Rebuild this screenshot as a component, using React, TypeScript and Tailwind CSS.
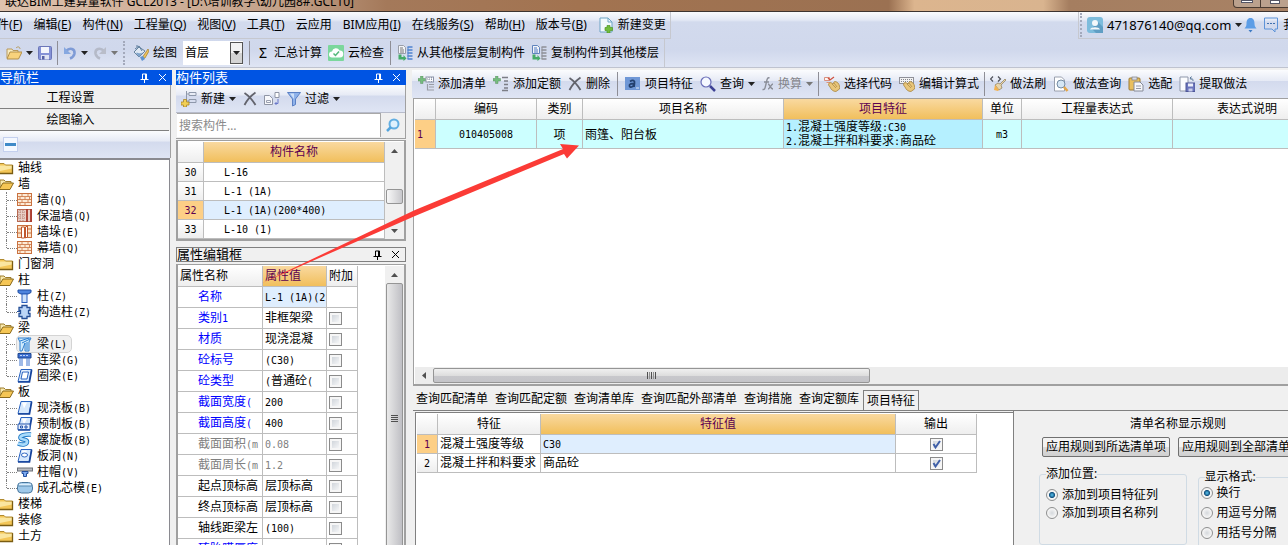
import React from "react";

/* Splits a label so that latin runs are set in a narrow monospaced face. */
function T({ s }: { s: string }) {
  return (
    <>
      {s.split(/([\x21-\x7e]+)/).map((p, i) =>
        /^[\x21-\x7e]+$/.test(p) ? (
          <span key={i} className="font-['DejaVu_Sans_Mono','Liberation_Mono',monospace] text-[10px]">
            {p}
          </span>
        ) : (
          p
        ),
      )}
    </>
  );
}

function Svg({ children, w = 16, h = 16 }: { children: React.ReactNode; w?: number; h?: number }) {
  return (
    <svg width={w} height={h} viewBox={`0 0 ${w} ${h}`} fill="none" className="shrink-0" aria-hidden="true">
      {children}
    </svg>
  );
}

const Caret = ({ dim = false }: { dim?: boolean }) => (
  <Svg w={7} h={4}>
    <path d="M0 0h7L3.500 4z" fill={dim ? "#777" : "#222"} />
  </Svg>
);
const Sep = ({ tight = false }: { tight?: boolean }) => (
  <span className={`h-6 w-px shrink-0 bg-[#8e8e96] ${tight ? "-mx-0.5" : ""}`} />
);
const Grip = () => <span className="h-6 w-0 shrink-0 border-l-2 border-dotted border-[#a3a9bb]" />;

const OpenIcon = () => (
  <Svg>
    <path d="M1 13V4h5l1 1.500h5V8" fill="#f8ecc0" stroke="#b8985a" />
    <path d="M1 14 4 7h12l-3.500 7z" fill="#f8d27c" stroke="#b38f48" />
    <path d="M10 3c2-2 4-1 4 1" stroke="#b59a5c" />
  </Svg>
);
const SaveIcon = () => (
  <Svg w={14}>
    <rect x=".5" y="1.500" width="13" height="13" rx="1" fill="#8592d6" stroke="#6b76b8" />
    <rect x="3" y="2" width="8" height="6" fill="#f3f5fc" />
    <rect x="3" y="10" width="8" height="4.500" fill="#dfe3f3" />
    <rect x="4" y="11" width="2.500" height="3.500" fill="#5560a5" />
  </Svg>
);
const UndoIcon = () => (
  <Svg w={14}>
    <path d="M3 6c4-4 9-2 8.500 2.500C11 11 9.500 12.500 7 13.500" stroke="#7e9bd6" strokeWidth="2.600" />
    <path d="M1 2v7h7z" fill="#86a8e0" />
  </Svg>
);
const RedoIcon = () => (
  <Svg w={14}>
    <path d="M11 6C7 2 2 4 2.500 8.500 3 11 4.500 12.500 7 13.500" stroke="#b5bac8" strokeWidth="2.600" />
    <path d="M13 2v7H6z" fill="#b9bdc9" />
  </Svg>
);
const PaintIcon = () => (
  <Svg>
    <path d="M1 7 6 2l6 4-6 6z" fill="#dfe8f3" stroke="#66839e" />
    <path d="M4 2V0M2 4l4-3 3 5" stroke="#5c7d9c" />
    <path d="M3 8c2-1 3 2 7-1l-4 5z" fill="#7ea3cb" />
    <path d="m15 4-4 6-3 4 4-1 4-7z" fill="#efc45c" stroke="#9d7a2c" strokeWidth=".7" />
    <path d="M7 12 9 16l3-2-2-3z" fill="#5e93d1" />
  </Svg>
);
const CloudCheckIcon = () => (
  <Svg>
    <rect width="16" height="16" rx="1" fill="#7bd79c" />
    <path d="M4 12.500a3 3 0 0 1 0-6 4 4 0 0 1 7.500-1 3.500 3.500 0 0 1 .5 7z" fill="#fff" />
    <path d="m5.500 8.500 2 2 3.500-4" stroke="#55b87b" strokeWidth="1.500" />
  </Svg>
);
const CopyFloorIcon = ({ flip = false }: { flip?: boolean }) => (
  <Svg>
    <path d="M1.500.5h5l2 2v6h-7z" fill="#f2f4f8" stroke={flip ? "#5f83bd" : "#9a9ea8"} />
    <path d="M3 3h3M3 5h4M3 7h4" stroke={flip ? "#4c79c4" : "#777"} />
    <path d="M1.500 9.500h3v2.500h2v-2l3 3.500-3 2.500v-1.500h-5z" fill="#45ab68" />
    <path d="M10.500 2h5M10.500 5h5M10.500 8h5M10.500 11h5M10.500 14h5" stroke={flip ? "#8d8f96" : "#4f83cf"} strokeWidth="1.600" />
    <path d="M11 2v12" stroke={flip ? "#8d8f96" : "#4f83cf"} />
  </Svg>
);
const NewDocIcon = () => (
  <Svg>
    <path d="M2 1h8l4 4v10H2z" fill="#f2f9fd" stroke="#6fa5c5" />
    <path d="M10 1v4h4" stroke="#6fa5c5" />
    <path d="M9 8.500h3v2h2.500v3H12V16H9v-2.500H7v-3h2z" fill="#72bd3d" stroke="#4f9727" strokeWidth=".7" />
  </Svg>
);
const UserIcon = () => (
  <Svg>
    <rect width="16" height="16" rx="3" fill="#7dbcdc" />
    <path d="m10 4 6 6v6H9l-4-4z" fill="#5f9ec4" />
    <circle cx="8" cy="6" r="3" fill="#f3f8fb" />
    <path d="M3 12.500c1-3 9-3 10 0z" fill="#f3f8fb" />
  </Svg>
);
const BellIcon = () => (
  <Svg w={13}>
    <path d="M6.500 1c3 0 4 2.500 4 5.500 0 2 .5 3.500 2 5h-12c1.500-1.500 2-3 2-5 0-3 1-5.500 4-5.500z" fill="#5c9de6" />
    <path d="M4.500 13h4l-2 2.500z" fill="#3f7cc4" />
  </Svg>
);
const ChatIcon = () => (
  <Svg>
    <path d="M1.500 1h13v11H12v3l-3-3H1.500z" stroke="#5d93d8" />
    <path d="M4 6.500h8.500" stroke="#3e6fae" strokeDasharray="2 1" />
  </Svg>
);
const PlusBadge = () => (
  <path d="M2.500 0H5v2.500h2.500V5H5v2.500H2.500V5H0V2.500h2.500z" fill="#74bd7e" stroke="#5c8c62" strokeWidth=".5" />
);
const AddListIcon = () => (
  <Svg>
    <PlusBadge />
    <rect x="8" y="1" width="7.500" height="5" fill="#fff" stroke="#8b93a8" />
    <path d="M9 3h6M11 1v5M13.500 1v5" stroke="#8b93a8" strokeDasharray="1 1" />
    <path d="M11 8.500h5M11 11h5M11 14h5M9.500 8v6h2" stroke="#9a9ca4" strokeWidth="1.200" />
  </Svg>
);
const AddQuotaIcon = () => (
  <Svg>
    <PlusBadge />
    <path d="M9 1.500h6M11 5h4M11 8.500h4M11 12h4M9 14.500h6" stroke="#7c7e86" strokeWidth="1.300" />
  </Svg>
);
const XIcon = () => (
  <Svg w={14}>
    <path d="M1.500 2c3 2 8 7 11 12M12.500 1.500C9 4 4 9 1.500 14" stroke="#62636c" strokeWidth="1.800" />
  </Svg>
);
const FeatureIcon = () => (
  <Svg>
    <rect x="0" y="1" width="15" height="13" fill="#6f97d6" />
    <path d="M5 5.500c3-2 5-1 4.500 1.500L9 11M9 7.500c-3 0-5 .5-4.500 2.500S8 11 9 9" stroke="#23406f" strokeWidth="1.800" />
    <path d="M11 12h3" stroke="#dfe8f6" />
  </Svg>
);
const SearchIcon = () => (
  <Svg>
    <circle cx="6" cy="6" r="5" fill="#f5f8ff" stroke="#6a6eb8" strokeWidth="1.200" />
    <path d="m10 10 5 5" stroke="#3d4194" strokeWidth="2.500" />
  </Svg>
);
const FxIcon = () => (
  <Svg w={12}>
    <path d="M7.500 2C5 1 5 4 4 8s-1 6-3.500 5.500M2 6h5M6 8c2 0 2 5 5 5M11 8c-2 0-3 5-5 5" stroke="#8b8e98" strokeWidth="1.400" />
  </Svg>
);
const HandIcon = ({ keys = false }: { keys?: boolean }) => (
  <Svg>
    {keys ? (
      <>
        <rect x=".5" y="1.500" width="14" height="6" fill="#f3f3f3" stroke="#8f9098" />
        <path d="M2 3.500h11M2 5.500h11" stroke="#85868e" strokeDasharray="1 1" />
      </>
    ) : (
      <>
        <path d="M.5 1.500h5v3h-5zM2.500 6.500h3v3" fill="#fdf3f0" stroke="#d88f7e" />
        <path d="m4 2 2 2 4-3" stroke="#cf4f3d" strokeWidth="1.200" />
      </>
    )}
    <path d="M5 7c1-1 3 0 4 1l1-2c1-1 3 0 4 1 1.500 2 2 4 1.500 6L12 15.500c-3 0-5-2-6-4.500L4.500 9z" fill="#e9c67a" stroke="#a8853f" strokeWidth=".8" />
    <path d="m8 8 4 4M10 7l3 4" stroke="#a8853f" strokeWidth=".7" />
  </Svg>
);
const BrushIcon = () => (
  <Svg>
    <path d="M3 .5 .5 3 3 5.500M8 .5 10.500 3 8 5.500" stroke="#4e5058" strokeWidth="1.200" />
    <path d="m15 3-5 5-2-1-3 2 4 5 3-2-1-3 5-5z" fill="#e9d5ab" stroke="#8a7a55" strokeWidth=".7" />
    <path d="m5 9-1 5 4 1 1-1z" fill="#f4b24e" />
  </Svg>
);
const DocSearchIcon = () => (
  <Svg>
    <path d="M1.500 1h7l3 3v11h-10z" fill="#fff" stroke="#9aa0ae" />
    <circle cx="8" cy="8" r="4" fill="#d5e6f4" stroke="#738aa3" />
    <path d="m11 11 3.500 4" stroke="#e3a64a" strokeWidth="2.500" />
  </Svg>
);
const PasteIcon = () => (
  <Svg>
    <rect x="1" y="2" width="11" height="12" rx="1" fill="#e9bf5e" stroke="#9c7a34" />
    <rect x="4" y="1" width="5" height="3" fill="#d9dbe3" stroke="#7d7f88" strokeWidth=".7" />
    <path d="M6 6h6l3 3v6H6z" fill="#f6f7fb" stroke="#858a98" />
    <path d="M8 10h5M8 12.500h5" stroke="#9599a6" />
  </Svg>
);
const ExtractIcon = () => (
  <Svg>
    <path d="M1 1h8v14H1z" fill="#fbfcfe" stroke="#8f97aa" />
    <rect x="7" y="7" width="9" height="8.500" fill="#6b75bd" stroke="#4e5798" />
    <rect x="9" y="7.500" width="5" height="3" fill="#eceefa" />
    <rect x="9.500" y="12.500" width="4" height="3" fill="#c9cdea" />
    <path d="M14 5c0-3-2-3-3-3M12.500.5 11 2l1.500 2" stroke="#5c7a9a" />
  </Svg>
);
const NewItemIcon = () => (
  <Svg>
    <path d="M8 1.500h7v3H8zM8 8.500h7v3H8zM5.500 0v10H8M5.500 3H8" stroke="#8e98ab" />
    <path d="M2.500 8.500h3v2.500H8v3H5.500v2h-3v-2H0v-3h2.500z" fill="#f2cf54" stroke="#a88629" strokeWidth=".8" />
  </Svg>
);
const CopyIcon = () => (
  <Svg>
    <path d="M.5 4.500h5l3 3v6h-8z" fill="#f7f8fb" stroke="#8f95a5" />
    <path d="M2.500 9.500h4v2h-4z" stroke="#9aa0b0" />
    <path d="M11 1.500h4v5h-4z" fill="#fff" stroke="#8f95a5" />
    <path d="M14 8v4.500h-3M12.500 11l-1.500 1.500 1.500 1.500" stroke="#6a78c9" />
  </Svg>
);
const FilterIcon = () => (
  <Svg w={14}>
    <path d="M.5 1.500h13L8.500 8v5.500l-3 1.500V8z" fill="#8fb2ea" stroke="#5b80c4" />
    <path d="M3 2.500h4L7 8" fill="#cfe0f8" />
  </Svg>
);
const LensIcon = () => (
  <Svg w={14} h={14}>
    <circle cx="8" cy="6" r="4.500" fill="#dff1fd" stroke="#62aee2" strokeWidth="2" />
    <path d="m5 9-4 4" stroke="#55a5dc" strokeWidth="2.500" />
  </Svg>
);
const PinIcon = () => (
  <Svg w={9} h={10}>
    <path d="M2.500 6V1h4v5M5.500 1v5M.5 6.500h8M4.500 6.500V10" stroke="currentColor" />
  </Svg>
);
const CloseIcon = () => (
  <Svg w={9} h={9}>
    <path d="m1 1 7 7M8 1 1 8" stroke="currentColor" />
  </Svg>
);

const BAR = "bg-[linear-gradient(to_bottom,#fbfcfe_0%,#e6eaf5_38%,#d3daed_40%,#dfe5f4_100%)]";
const ORANGE = "bg-[linear-gradient(to_bottom,#f9d9a0,#f1bf5c)] text-[#5c0050]";
const HEAD = "bg-[linear-gradient(to_bottom,#ffffff,#eeeeee)]";
const CELL = "border-b border-r border-[#bdbdbd] p-0 font-normal whitespace-nowrap overflow-hidden";

function Btn({ icon, label, caret, dim }: { icon: React.ReactNode; label?: string; caret?: boolean; dim?: boolean }) {
  return (
    <button
      type="button"
      className={`flex shrink-0 items-center gap-1 whitespace-nowrap ${dim ? "text-[#85868c]" : "text-black"}`}
    >
      {icon}
      {label && <span>{label}</span>}
      {caret && <Caret dim={dim} />}
    </button>
  );
}

function PanelTitle({ title, active }: { title: string; active?: boolean }) {
  return (
    <header
      className={`flex h-[15px] shrink-0 items-center gap-[9px] pr-[5px] text-[13px] leading-[15px] ${
        active ? "bg-[#0054e3] text-white" : "border border-[#808080] text-black"
      }`}
    >
      <h2 className="flex-1 whitespace-nowrap">{title}</h2>
      <button type="button" aria-label="Pin">
        <PinIcon />
      </button>
      <button type="button" aria-label="Close">
        <CloseIcon />
      </button>
    </header>
  );
}

function Check({ label, checked }: { label: string; checked?: boolean }) {
  return (
    <span className="relative inline-block size-[13px] align-middle">
      <input
        type="checkbox"
        aria-label={label}
        defaultChecked={checked}
        className="block size-[13px] appearance-none border border-[#8b8b8b] bg-[linear-gradient(135deg,#c6ccd3,#ffffff)] shadow-[inset_0_0_0_2px_#f6f6f6]"
      />
      {checked && (
        <svg viewBox="0 0 13 13" className="pointer-events-none absolute inset-0 size-[13px]" fill="none" aria-hidden="true">
          <path d="M3.500 6 5.500 9.500 10 3" stroke="#3f5fa8" strokeWidth="2" />
        </svg>
      )}
    </span>
  );
}

function Radio({ name, label, checked }: { name: string; label: string; checked?: boolean }) {
  return (
    <label className="flex items-center gap-1 whitespace-nowrap">
      <input
        type="radio"
        name={name}
        defaultChecked={checked}
        className="size-3 appearance-none rounded-full border border-[#8e8f8f] bg-[radial-gradient(circle,#d4d8dc_0,#f4f4f4_60%)] checked:bg-[radial-gradient(circle,#58c6f2_0,#14527f_38%,#f4f4f4_48%)]"
      />
      {label}
    </label>
  );
}

/* ---- navigation tree ---- */
const Brick = ({ c = "#c9713f" }: { c?: string }) => (
  <Svg>
    <rect x=".5" y="1.500" width="14" height="12" fill="#fdebd6" stroke={c} />
    <path d="M1 4.500h13M1 7.500h13M1 10.500h13M5 2v2.500M11 2v2.500M3 5v2.500M8 5v2.500M12.500 5v2.500M5 8v2.500M11 8v2.500M3 11v2.500M8 11v2.500" stroke={c} strokeWidth=".8" />
  </Svg>
);
const Slab = ({ extra }: { extra?: React.ReactNode }) => (
  <Svg>
    <path d="M4 1.500h10.500l-2.500 12H1z" fill="#d6e8fc" stroke="#2a63c0" />
    <path d="M5 2.500h5l-3 6z" fill="#fff" />
    <path d="M14.500 1.500v1.500L12.500 14H1" stroke="#16439a" strokeWidth="1.600" />
    {extra}
  </Svg>
);
const ICONS: Record<string, React.ReactNode> = {
  brick: <Brick />,
  insul: (
    <Svg>
      <rect x=".5" y="1.500" width="14" height="12" fill="#e9cfc6" stroke="#b86a52" />
      <path d="M1 4h8M1 7h8M1 10h8M3 2v12M6 2v12" stroke="#b98578" strokeDasharray="1 1" />
      <path d="M10 1v13M14 1v13" stroke="#a9392b" strokeWidth="1.800" />
    </Svg>
  ),
  pier: (
    <Svg>
      <rect x=".5" y="1.500" width="14" height="12" fill="#fbe3c8" stroke="#c9713f" />
      <path d="M1 5h13M1 9h13" stroke="#c9713f" />
      <path d="M4.500 3h3v11h-3zM8.500 3l2-1v11l-2 1z" fill="#fff" stroke="#c0562c" />
    </Svg>
  ),
  column: (
    <Svg>
      <path d="M1 2h13v2.500l-3 1.500H4L1 4.500z" fill="#4d84de" stroke="#1f4da3" />
      <rect x="5" y="6" width="5" height="8.500" fill="#cfe3fb" stroke="#2a5fbd" />
    </Svg>
  ),
  cross: (
    <Svg>
      <path d="M5 1.500h5v2h3v3h-1.500v3H13v3h-3v2H5v-2H2v-3h1.500v-3H2v-3h3z" fill="#bcd6f7" stroke="#254f97" strokeWidth="1.300" />
      <path d="M0 7.500h4" stroke="#254f97" />
    </Svg>
  ),
  beam: (
    <Svg>
      <path d="M1 2h13l-2 4v9H8V7l-3 8H3V6z" fill="#cfeafc" stroke="#2c7fd0" />
      <path d="m3 5 9-3M5 7l8-4M10 6v8" stroke="#2c7fd0" />
    </Svg>
  ),
  link: (
    <Svg>
      <path d="M1 1.500h13V6H1z" fill="#3d6fd0" stroke="#1e478f" />
      <path d="M3 3.500h9" stroke="#bcd3f6" strokeDasharray="2 1" />
      <path d="M3 6v8M5 6v8M10 6v8M12 6v8" stroke="#3f74cf" />
    </Svg>
  ),
  ring: <Slab extra={<path d="M5.500 4h6l-1.500 7H4z" fill="#fff" stroke="#2a63c0" />} />,
  slab: <Slab />,
  precast: <Slab extra={<path d="M1 8h12v5.500H1zM3.500 10h2v2h-2zM8 10h2v2H8z" fill="#e8f0fd" stroke="#2457ae" />} />,
  spiral: (
    <Svg>
      <path d="M14 2.500C8 2 3 3.500 3.500 6c.5 2 6.500 1 6.500 3.500 0 3-4 4-9 2" stroke="#1b76c4" strokeWidth="4.500" />
      <path d="M14 2.500C8 2 3 3.500 3.500 6c.5 2 6.500 1 6.500 3.500 0 3-4 4-9 2" stroke="#a9dbfa" strokeWidth="2.800" />
    </Svg>
  ),
  hole: <Slab extra={<ellipse cx="7.500" cy="7" rx="3" ry="2" fill="#fff" stroke="#2a63c0" />} />,
  cap: (
    <Svg>
      <rect x=".5" y="4" width="15" height="3" fill="#b9bcc2" stroke="#6d7077" />
      <path d="M5 7.500h6v2H9.500v3h-3v-3H5z" fill="#7ba9ee" stroke="#234f9f" />
    </Svg>
  ),
  core: (
    <Svg>
      <rect x=".5" y="2.500" width="15" height="10.500" rx="4" fill="#9fc9ea" stroke="#49779d" />
      <path d="M1 6h14" stroke="#5b89ae" />
      <path d="M2 4.500h12" stroke="#dceefb" strokeWidth="1.500" />
    </Svg>
  ),
};
const Folder = ({ open }: { open: boolean }) => (
  <Svg w={14} h={14}>
    {open ? (
      <>
        <path d="M0 12V3h4l1.500 1.500H11V7" fill="#f9e9ae" stroke="#9c7c2c" />
        <path d="M-1 12.500 3 6h10.500l-3.500 6.500z" fill="#f5c655" stroke="#8a6a1c" />
      </>
    ) : (
      <>
        <path d="M0 2.500h4l1.500 1.500h7v8.500H0z" fill="#f3c657" />
        <path d="M0 4.500h12v3L0 10z" fill="#fae6a0" />
        <path d="M0 12.500h12.500V4" stroke="#7a5c12" strokeWidth="1.300" />
        <path d="M0 2.500h4l1.500 1.500h7" stroke="#b08a30" />
      </>
    )}
  </Svg>
);

type Node = { name: string; kids?: [string, string][] };
const TREE: Node[] = [
  { name: "轴线" },
  { name: "墙", kids: [["brick", "墙(Q)"], ["insul", "保温墙(Q)"], ["pier", "墙垛(E)"], ["brick", "幕墙(Q)"]] },
  { name: "门窗洞" },
  { name: "柱", kids: [["column", "柱(Z)"], ["cross", "构造柱(Z)"]] },
  { name: "梁", kids: [["beam", "梁(L)"], ["link", "连梁(G)"], ["ring", "圈梁(E)"]] },
  {
    name: "板",
    kids: [
      ["slab", "现浇板(B)"],
      ["precast", "预制板(B)"],
      ["spiral", "螺旋板(B)"],
      ["hole", "板洞(N)"],
      ["cap", "柱帽(V)"],
      ["core", "成孔芯模(E)"],
    ],
  },
  { name: "楼梯" },
  { name: "装修" },
  { name: "土方" },
];

const MENUS: [string, string][] = [
  ["件", "F"], ["编辑", "E"], ["构件", "N"], ["工程量", "Q"], ["视图", "V"], ["工具", "T"],
  ["云应用", ""], ["BIM应用", "I"], ["在线服务", "S"], ["帮助", "H"], ["版本号", "B"],
];

const COMPONENTS: [string, string][] = [
  ["30", "L-16"],
  ["31", "L-1 (1A)"],
  ["32", "L-1 (1A)(200*400)"],
  ["33", "L-10 (1)"],
];

const PROPS: [string, string, string][] = [
  ["类别1", "非框架梁", "text-[#0000ff]"],
  ["材质", "现浇混凝", "text-[#0000ff]"],
  ["砼标号", "(C30)", "text-[#0000ff]"],
  ["砼类型", "(普通砼(", "text-[#0000ff]"],
  ["截面宽度(", "200", "text-[#0000ff]"],
  ["截面高度(", "400", "text-[#0000ff]"],
  ["截面面积(m", "0.08", "text-[#808080]"],
  ["截面周长(m", "1.2", "text-[#808080]"],
  ["起点顶标高", "层顶标高", "text-black"],
  ["终点顶标高", "层顶标高", "text-black"],
  ["轴线距梁左", "(100)", "text-black"],
  ["砖胎膜厚度", "", "text-[#0000ff]"],
];

function NavPanel() {
  return (
    <aside className="flex w-[172px] shrink-0 flex-col overflow-hidden">
      <PanelTitle title="导航栏" active />
      <div className="mr-px flex flex-col border-r border-[#a0a0a0] pt-[2px]">
        <button type="button" className="mr-px h-[22px] border-b border-[#808080] bg-[#f0f0f0] pr-7 pt-px">
          工程设置
        </button>
        <button type="button" className="mr-px h-[22px] border-b border-[#808080] bg-[#f0f0f0] pr-7 pt-px">
          绘图输入
        </button>
        <div className={`flex h-[27px] items-center pl-[3px] ${BAR}`}>
          <button type="button" aria-label="Collapse all" className="flex size-[15px] items-center border border-[#c4d0ee] bg-[#f4f8ff] px-px">
            <span className="h-[3px] w-full bg-[#3f8ac8]" />
          </button>
        </div>
      </div>
      <ul className="mr-[2px] flex-1 overflow-hidden border-r border-t-2 border-[#8a8a90] bg-white leading-4">
        {TREE.map((n) => (
          <li key={n.name}>
            <div className="flex h-4 items-center gap-1">
              <Folder open={!!n.kids} />
              {n.name}
            </div>
            {n.kids && (
              <ul className="pl-[6px]">
                {n.kids.map(([icon, label], i) => (
                  <li key={label} className="flex h-4 items-center">
                    <span className="flex h-full w-[11px] shrink-0 items-center">
                      <span
                        className={`w-0 shrink-0 self-start border-l border-dotted border-[#808080] ${
                          i === n.kids!.length - 1 ? "h-1/2" : "h-full"
                        }`}
                      />
                      <span className="h-0 flex-1 border-t border-dotted border-[#808080]" />
                    </span>
                    <a
                      href="#"
                      className={`flex h-4 items-center gap-1 rounded-sm pr-1 ${
                        icon === "beam" ? "bg-[#f0f0f0] outline outline-[#d4d4d4]" : ""
                      }`}
                    >
                      {ICONS[icon]}
                      <span className="whitespace-nowrap">
                        <T s={label} />
                      </span>
                    </a>
                  </li>
                ))}
              </ul>
            )}
          </li>
        ))}
      </ul>
    </aside>
  );
}

const UpDown = ({ down = false }: { down?: boolean }) => (
  <span className="flex h-[17px] shrink-0 items-center justify-center">
    <Svg w={7} h={4}>
      <path d={down ? "M0 0h7L3.500 4z" : "M0 4h7L3.500 0z"} fill="#505050" />
    </Svg>
  </span>
);

function ComponentPanel() {
  return (
    <section className="shrink-0">
      <PanelTitle title="构件列表" active />
      <div className="border-r border-[#a0a0a0]">
        <div className={`flex h-7 items-center gap-[7px] border-b border-[#b8bccb] pl-[5px] ${BAR}`}>
          <Btn icon={<NewItemIcon />} label="新建" caret />
          <Btn icon={<XIcon />} />
          <Btn icon={<CopyIcon />} />
          <Btn icon={<FilterIcon />} label="过滤" caret />
        </div>
        <div className="flex h-[26px] border-b border-[#a0a0a0] pb-px pl-px">
          <input
            type="text"
            aria-label="搜索构件"
            placeholder="搜索构件…"
            className="h-6 min-w-0 flex-1 border-t border-r border-[#a8a8a8] bg-white px-0.5 pb-px placeholder:text-[#8a8a8a] outline-none"
          />
          <button type="button" aria-label="搜索" className="flex w-6 items-center justify-center">
            <LensIcon />
          </button>
        </div>
      </div>
      <div className="mt-px flex border-b-2 border-l-2 border-r-2 border-t border-[#a0a0a0] bg-white pt-px">
        <table className="flex-1 table-fixed border-separate border-spacing-0">
          <thead>
            <tr className="h-[21px]">
              <th className={`${CELL} ${HEAD} w-[26px]`} aria-label="序号" />
              <th className={`${CELL} ${ORANGE} w-[181px]`}>构件名称</th>
            </tr>
          </thead>
          <tbody>
            {COMPONENTS.map(([n, name]) => (
              <tr key={n} className="h-[19px] leading-4">
                <td className={`${CELL} text-center ${n === "32" ? "bg-[#fdcf86] text-[#5c0050]" : HEAD}`}>
                  <T s={n} />
                </td>
                <td className={`${CELL} pl-5 ${n === "32" ? "bg-[#dfeefe]" : "bg-white"}`}>
                  <span className="font-['DejaVu_Sans_Mono','Liberation_Mono',monospace] text-[10px]">{name}</span>
                </td>
              </tr>
            ))}
          </tbody>
        </table>
        <div className="flex w-[19px] shrink-0 flex-col justify-between bg-[#f0f0f0] px-px">
          <UpDown />
          <span className="mt-3 h-[15px] rounded-[2px] border border-[#959595] bg-[linear-gradient(to_right,#f8f8f8,#c8c8cc)]" />
          <UpDown down />
        </div>
      </div>
    </section>
  );
}

function PropertyPanel() {
  return (
    <section className="flex min-h-0 flex-1 flex-col overflow-hidden">
      <PanelTitle title="属性编辑框" />
      <div className="mt-[2px] flex min-h-0 flex-1 items-start overflow-hidden border-l-2 border-r-2 border-t border-[#a0a0a0] bg-white pt-px">
        <table className="w-[180px] shrink-0 table-fixed border-separate border-spacing-0">
          <thead>
            <tr className="h-[21px] text-left">
              <th className={`${CELL} ${HEAD} w-[85px] pl-[2px]`}>属性名称</th>
              <th className={`${CELL} ${ORANGE} w-16 pl-[2px]`}>属性值</th>
              <th className={`${CELL} ${HEAD} w-[31px] pl-[2px]`}>附加</th>
            </tr>
          </thead>
          <tbody>
            <tr className="h-[21px] leading-4">
              <td className={`${CELL} pl-5 text-[#0000ff]`}>名称</td>
              <td className={`${CELL} bg-[#dfeefe] pl-[2px]`}>
                <span className="font-['DejaVu_Sans_Mono','Liberation_Mono',monospace] text-[10px]">L-1 (1A)(2</span>
              </td>
              <td className={CELL} />
            </tr>
            {PROPS.map(([k, v, c]) => (
              <tr key={k} className="h-[21px] leading-4">
                <td className={`${CELL} pl-5 ${c}`}>
                  <T s={k} />
                </td>
                <td className={`${CELL} pl-[2px] ${c === "text-[#808080]" ? c : "text-black"}`}>
                  <T s={v} />
                </td>
                <td className={`${CELL} pl-[2px] leading-none`}>
                  <Check label={k} />
                </td>
              </tr>
            ))}
          </tbody>
        </table>
        <div className="ml-auto flex w-[19px] shrink-0 flex-col self-stretch overflow-hidden bg-[#f0f0f0] px-px">
          <UpDown />
          <span className="flex h-[270px] shrink-0 items-center justify-center rounded-[2px] border border-[#959595] bg-[linear-gradient(to_right,#e9e9e9,#bfbfc4)]">
            <span className="flex flex-col gap-px">
              <span className="h-px w-[7px] bg-[#505050]" />
              <span className="h-px w-[7px] bg-[#505050]" />
              <span className="h-px w-[7px] bg-[#505050]" />
              <span className="h-px w-[7px] bg-[#505050]" />
            </span>
          </span>
        </div>
      </div>
    </section>
  );
}

function QuantityGrid() {
  return (
    <section className="flex min-h-0 flex-1 flex-col">
      <div className={`flex h-7 shrink-0 items-center gap-[7px] overflow-hidden pl-[6px] ${BAR}`}>
        <Btn icon={<AddListIcon />} label="添加清单" />
        <Btn icon={<AddQuotaIcon />} label="添加定额" />
        <Btn icon={<XIcon />} label="删除" />
        <Sep />
        <Btn icon={<FeatureIcon />} label="项目特征" />
        <Btn icon={<SearchIcon />} label="查询" caret />
        <Btn icon={<FxIcon />} label="换算" caret dim />
        <Sep tight />
        <Btn icon={<HandIcon />} label="选择代码" />
        <Btn icon={<HandIcon keys />} label="编辑计算式" />
        <Sep tight />
        <Btn icon={<BrushIcon />} label="做法刷" />
        <Btn icon={<DocSearchIcon />} label="做法查询" />
        <Btn icon={<PasteIcon />} label="选配" />
        <Btn icon={<ExtractIcon />} label="提取做法" />
      </div>
      <div className="ml-px flex min-h-0 flex-1 flex-col overflow-hidden border-b-2 border-l border-t border-[#a0a0a0] bg-white pl-px">
        <table className="w-[907px] table-fixed border-separate border-spacing-0">
          <colgroup>
            <col className="w-[21px]" />
            <col className="w-[101px]" />
            <col className="w-[46px]" />
            <col className="w-[201px]" />
            <col className="w-[199px]" />
            <col className="w-[39px]" />
            <col className="w-[151px]" />
            <col className="w-[149px]" />
          </colgroup>
          <thead>
            <tr className="h-[21px]">
              <th className={`${CELL} ${HEAD}`} aria-label="序号" />
              {["编码", "类别", "项目名称", "项目特征", "单位", "工程量表达式", "表达式说明"].map((h) => (
                <th key={h} className={`${CELL} ${h === "项目特征" ? ORANGE : HEAD}`}>
                  {h}
                </th>
              ))}
            </tr>
          </thead>
          <tbody>
            <tr className="h-[29px] bg-[#ccffff] leading-[13px]">
              <td className={`${CELL} bg-[#fdcf86] pl-[2px] text-[#5c0050]`}>
                <T s="1" />
              </td>
              <td className={`${CELL} text-center`}>
                <T s="010405008" />
              </td>
              <td className={`${CELL} text-center`}>项</td>
              <td className={`${CELL} pl-[2px]`}>雨篷、阳台板</td>
              <td className={`${CELL} bg-[#b5f0ff] pl-[2px]`}>
                <T s="1.混凝土强度等级:C30" />
                <br />
                <T s="2.混凝土拌和料要求:商品砼" />
              </td>
              <td className={`${CELL} text-center`}>
                <T s="m3" />
              </td>
              <td className={CELL} />
              <td className={CELL} />
            </tr>
          </tbody>
        </table>
        <div className="mt-auto flex h-[17px] shrink-0 items-center bg-[#ececec]">
          <span className="flex w-[18px] justify-center">
            <Svg w={4} h={7}>
              <path d="M4 0v7L0 3.500z" fill="#505050" />
            </Svg>
          </span>
          <span className="flex h-[15px] w-1/2 items-center justify-center gap-px rounded-[2px] border border-[#959595] bg-[linear-gradient(to_bottom,#f0f0f0_0%,#dedede_50%,#c8c8cc_55%,#c4c4c8_100%)]">
            <span className="h-[7px] w-px bg-[#505050]" />
            <span className="h-[7px] w-px bg-[#909090]" />
            <span className="h-[7px] w-px bg-[#505050]" />
            <span className="h-[7px] w-px bg-[#909090]" />
            <span className="h-[7px] w-px bg-[#505050]" />
          </span>
        </div>
      </div>
    </section>
  );
}

const TABS = ["查询匹配清单", "查询匹配定额", "查询清单库", "查询匹配外部清单", "查询措施", "查询定额库"];
const RULE_BTN =
  "h-5 w-32 shrink-0 whitespace-nowrap rounded-[2px] border border-[#707070] bg-[linear-gradient(to_bottom,#f3f3f3_50%,#dcdcdc_52%,#d0d0d0)] px-[3px] text-left leading-[18px]";

function FeaturePanel() {
  return (
    <section className="flex h-[159px] shrink-0 flex-col pl-px">
      <div className="flex h-[25px] shrink-0 items-end gap-[7px] border-b border-[#808080] pl-[3px]">
        {TABS.map((t) => (
          <button key={t} type="button" className="h-[22px] shrink-0 whitespace-nowrap">
            {t}
          </button>
        ))}
        <button
          type="button"
          className="-ml-[3px] h-5 shrink-0 whitespace-nowrap border-l border-r border-t border-[#808080] px-[3px] pt-px"
        >
          项目特征
        </button>
      </div>
      <div className="flex min-h-0 flex-1">
        <div className="min-w-0 flex-1 overflow-hidden border-r border-[#808080] pt-px">
          <div className="ml-[2px] h-full border-l border-t border-[#808080] bg-white pl-px pt-px">
            <table className="w-[560px] table-fixed border-separate border-spacing-0">
              <thead>
                <tr className="h-[21px]">
                  <th className={`${CELL} ${HEAD} w-[21px]`} aria-label="序号" />
                  <th className={`${CELL} ${HEAD} w-[103px]`}>特征</th>
                  <th className={`${CELL} ${ORANGE} w-[355px]`}>特征值</th>
                  <th className={`${CELL} ${HEAD} w-[81px]`}>输出</th>
                </tr>
              </thead>
              <tbody>
                {[
                  ["1", "混凝土强度等级", "C30"],
                  ["2", "混凝土拌和料要求", "商品砼"],
                ].map(([n, k, v]) => (
                  <tr key={n} className="h-[19px] leading-4">
                    <td className={`${CELL} text-center ${n === "1" ? "bg-[#fdcf86] text-[#5c0050]" : HEAD}`}>
                      <T s={n} />
                    </td>
                    <td className={`${CELL} pl-[2px]`}>{k}</td>
                    <td className={`${CELL} pl-[2px] ${n === "1" ? "bg-[#dfeefe]" : ""}`}>
                      <T s={v} />
                    </td>
                    <td className={`${CELL} text-center leading-none`}>
                      <Check label={k} checked />
                    </td>
                  </tr>
                ))}
              </tbody>
            </table>
          </div>
        </div>
        <div className="w-[274px] shrink-0 overflow-hidden pl-[25px] pt-[5px]">
          <div className="flex w-[306px] flex-col">
            <h3 className="h-[21px] pr-7 text-center leading-4">清单名称显示规则</h3>
            <div className="flex gap-2 pl-[3px]">
              <button type="button" className={RULE_BTN}>应用规则到所选清单项</button>
              <button type="button" className={RULE_BTN}>应用规则到全部清单</button>
            </div>
            <div className="flex items-start gap-[11px] pt-[9px]">
              <fieldset className="h-[79px] w-[148px] rounded-[3px] border border-[#d0dbe4] px-[6px]">
                <legend className="leading-4">添加位置:</legend>
                <div className="flex flex-col gap-[2px] pt-[5px] leading-4">
                  <Radio name="place" label="添加到项目特征列" checked />
                  <Radio name="place" label="添加到项目名称列" />
                </div>
              </fieldset>
              <fieldset className="mt-[3px] h-[79px] w-[148px] rounded-[3px] border border-[#d0dbe4] px-[2px]">
                <legend className="ml-[4px] leading-4">显示格式:</legend>
                <div className="flex flex-col gap-1 leading-4">
                  <Radio name="format" label="换行" checked />
                  <Radio name="format" label="用逗号分隔" />
                  <Radio name="format" label="用括号分隔" />
                </div>
              </fieldset>
            </div>
          </div>
        </div>
      </div>
    </section>
  );
}

export default function App() {
  return (
    <div className="relative flex h-screen flex-col overflow-hidden bg-[#f0f0f0] font-['Noto_Sans','Noto_Sans_CJK_SC',sans-serif] text-[12px] leading-4 text-black">
      <div className="flex h-3 shrink-0 items-end overflow-hidden border-b border-[#3d3430] bg-[linear-gradient(to_right,#dfc3ae_0%,#c3a189_22%,#a4795a_30%,#a27350_45%,#9b7152_69%,#dcb58e_71%,#d9b48f_81%,#a57e60_83%,#a88265_100%)] pl-[5px]">
        <h1 className="whitespace-nowrap pb-px leading-4">联达BIM土建算量软件 GCL2013 - [D:\培训教学\幼儿园8#.GCL10]</h1>
        <div className="-mr-px ml-auto flex self-start text-white">
          <button type="button" aria-label="Minimize" className="flex h-2 w-7 justify-center rounded-bl-[4px] border-b border-l border-r border-[#4a3b31] bg-[#bba18d]">
            <span className="h-[3px] w-3 border border-[#545463] bg-white" />
          </button>
          <button type="button" aria-label="Restore" className="flex h-2 w-7 justify-center border-b border-[#4a3b31] bg-[#bba18d]">
            <span className="h-1 w-[10px] border border-[#545463] bg-white" />
          </button>
        </div>
      </div>

      <div className="shrink-0 border-b border-[#bfc3cf] bg-[linear-gradient(to_bottom,#fafbfd_0px,#e4e9f5_8px,#d2daed_10px,#d0d8ec_38px,#dfe5f4_55px)]">
        <div className="flex h-[27px]">
          <nav className="-ml-[3px] flex items-center gap-[11px] border-b border-r border-[#c6c8cf] pr-1">
            {MENUS.map(([label, key]) => (
              <a key={label} href="#" className="whitespace-nowrap">
                {label}
                {key && (
                  <>
                    (<u>{key}</u>)
                  </>
                )}
              </a>
            ))}
            <Btn icon={<NewDocIcon />} label="新建变更" />
          </nav>
          <div className="ml-auto flex w-[210px] shrink-0 items-center gap-[2px] overflow-hidden border-b border-l border-[#c6c8cf] pl-px">
            <Grip />
            <button type="button" className="ml-[3px] flex shrink-0 items-center gap-1">
              <UserIcon />
              <span className="text-[13px]">471876140@qq.com</span>
              <Caret />
            </button>
            <button type="button" aria-label="Notifications" className="shrink-0">
              <BellIcon />
            </button>
            <button type="button" className="ml-1 flex shrink-0 items-center gap-1">
              <ChatIcon />
              <span>我</span>
            </button>
          </div>
        </div>
        <div className="flex h-7 w-max items-center gap-2 border-r border-[#c6c8cf] pl-[6px] pr-[5px]">
          <div className="flex items-center gap-[5px]">
            <Btn icon={<OpenIcon />} caret />
            <Btn icon={<SaveIcon />} />
            <Sep />
            <Btn icon={<UndoIcon />} caret />
            <Btn icon={<RedoIcon />} caret dim />
            <Grip />
          </div>
          <div className="flex items-center gap-[6px]">
            <Btn icon={<PaintIcon />} label="绘图" />
            <span className="relative flex h-6 w-[60px] bg-white">
              <select aria-label="楼层" className="w-full appearance-none bg-transparent pl-[2px] leading-4 outline-none">
                <option>首层</option>
              </select>
              <span className="pointer-events-none absolute inset-y-px right-0 flex w-[13px] items-center justify-center border border-[#555] bg-[linear-gradient(to_bottom,#f2f2f2_50%,#d4d4d4_52%)]">
                <Caret />
              </span>
            </span>
            <Sep />
            <Btn icon={<span className="w-[14px] text-center text-sm leading-4">Σ</span>} label="汇总计算" />
            <Btn icon={<CloudCheckIcon />} label="云检查" />
            <Sep />
            <Btn icon={<CopyFloorIcon />} label="从其他楼层复制构件" />
            <Btn icon={<CopyFloorIcon flip />} label="复制构件到其他楼层" />
          </div>
        </div>
      </div>

      <div className="flex min-h-0 flex-1">
        <div className="flex pt-[2px]">
          <NavPanel />
          <div className="ml-1 flex w-[230px] shrink-0 flex-col gap-[6px]">
            <ComponentPanel />
            <PropertyPanel />
          </div>
        </div>
        <main className="ml-[6px] flex min-w-0 flex-1 flex-col pt-[2px]">
          <QuantityGrid />
          <FeaturePanel />
        </main>
      </div>

      <svg width="330" height="150" viewBox="0 0 330 150" className="pointer-events-none absolute left-[255px] top-[140px]" aria-hidden="true">
        <path d="M6 143.500 160 70 308 9 305 4 324 5.500 312 18.500 309 14 160 76Z" fill="#fb3b36" />
      </svg>
    </div>
  );
}
